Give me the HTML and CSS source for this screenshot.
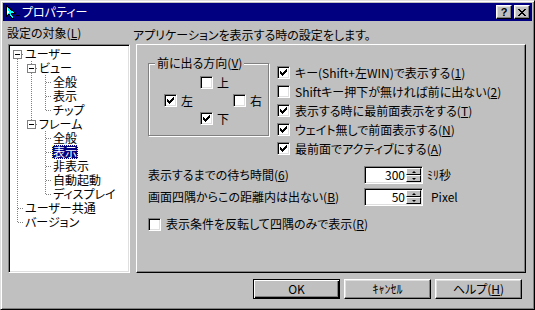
FILE: index.html
```html
<!DOCTYPE html>
<html lang="ja">
<head>
    <meta charset="UTF-8">
    <title>プロパティー</title>
    <link rel="stylesheet" href="styles.css">
</head>
<body>
    <svg class="defs" width="0" height="0">
        <symbol id="chk" viewBox="0 0 7 7">
            <path d="M6 0h1v1h-1zM5 1h2v1h-2zM0 2h1v1h-1zM4 2h3v1h-3zM0 3h2v1h-2zM3 3h3v1h-3zM0 4h5v1h-5zM1 5h3v1h-3zM2 6h1v1h-1z"/>
        </symbol>
    </svg>

    <div class="window">
        <div class="titlebar">
            <svg class="app-icon" width="16" height="16" viewBox="0 0 16 16" shape-rendering="crispEdges">
                <path d="M2 1v12l3-3 3 5 2-1-3-5h4z" fill="#00ffff" stroke="#000" stroke-width="1"/>
                <path d="M3 3v7l2-2z" fill="#fff"/>
                <rect x="12" y="11" width="4" height="1" fill="#000"/>
            </svg>
            <span class="title">プロパティー</span>
            <span class="tb-btn help">?</span>
            <span class="tb-btn close">
                <svg width="8" height="7" viewBox="0 0 8 7" shape-rendering="crispEdges">
                    <path d="M0 0h2v1h-2zM6 0h2v1h-2zM1 1h2v1h-2zM5 1h2v1h-2zM2 2h4v1h-4zM3 3h2v1h-2zM2 4h4v1h-4zM1 5h2v1h-2zM5 5h2v1h-2zM0 6h2v1h-2zM6 6h2v1h-2z"/>
                </svg>
            </span>
        </div>

        <div class="main">
            <div class="caption left">設定の対象(<u>L</u>)</div>
            <div class="caption right">アプリケーションを表示する時の設定をします。</div>

            <div class="tree">
                <div class="row"><span class="c f"><i class="box"></i></span><span class="lbl">ユーザー</span></div>
                <div class="row"><span class="c v"></span><span class="c t"><i class="box"></i></span><span class="lbl">ビュー</span></div>
                <div class="row"><span class="c v"></span><span class="c v"></span><span class="c t"></span><span class="lbl">全般</span></div>
                <div class="row"><span class="c v"></span><span class="c v"></span><span class="c t"></span><span class="lbl">表示</span></div>
                <div class="row"><span class="c v"></span><span class="c v"></span><span class="c l"></span><span class="lbl">チップ</span></div>
                <div class="row"><span class="c v"></span><span class="c l"><i class="box"></i></span><span class="lbl">フレーム</span></div>
                <div class="row"><span class="c v"></span><span class="c"></span><span class="c t"></span><span class="lbl">全般</span></div>
                <div class="row"><span class="c v"></span><span class="c"></span><span class="c t"></span><span class="lbl sel">表示</span></div>
                <div class="row"><span class="c v"></span><span class="c"></span><span class="c t"></span><span class="lbl">非表示</span></div>
                <div class="row"><span class="c v"></span><span class="c"></span><span class="c t"></span><span class="lbl">自動起動</span></div>
                <div class="row"><span class="c v"></span><span class="c"></span><span class="c l"></span><span class="lbl">ディスプレイ</span></div>
                <div class="row"><span class="c t"></span><span class="lbl">ユーザー共通</span></div>
                <div class="row"><span class="c l"></span><span class="lbl">バージョン</span></div>
            </div>

            <div class="page">
                <div class="top">
                    <fieldset class="group">
                        <legend>前に出る方向(<u>V</u>)</legend>
                        <label class="check dir-up"><span class="cb"></span><span>上</span></label>
                        <label class="check dir-left"><span class="cb"><svg><use href="#chk"/></svg></span><span>左</span></label>
                        <label class="check dir-right"><span class="cb"></span><span>右</span></label>
                        <label class="check dir-down"><span class="cb"><svg><use href="#chk"/></svg></span><span>下</span></label>
                    </fieldset>

                    <div class="opts">
                        <label class="check"><span class="cb"><svg><use href="#chk"/></svg></span><span>キー(Shift+左WIN)で表示する(<u>1</u>)</span></label>
                        <label class="check"><span class="cb"></span><span>Shiftキー押下が無ければ前に出ない(<u>2</u>)</span></label>
                        <label class="check"><span class="cb"><svg><use href="#chk"/></svg></span><span>表示する時に最前面表示をする(<u>T</u>)</span></label>
                        <label class="check"><span class="cb"><svg><use href="#chk"/></svg></span><span>ウェイト無しで前面表示する(<u>N</u>)</span></label>
                        <label class="check"><span class="cb"><svg><use href="#chk"/></svg></span><span>最前面でアクティブにする(<u>A</u>)</span></label>
                    </div>
                </div>

                <div class="fields">
                    <span>表示するまでの待ち時間(<u>6</u>)</span>
                    <div class="spin"><span class="val">300</span><span class="arrows"><i class="up"></i><i class="dn"></i></span></div>
                    <span class="unit">ﾐﾘ秒</span>

                    <span>画面四隅からこの距離内は出ない(<u>B</u>)</span>
                    <div class="spin"><span class="val">50</span><span class="arrows"><i class="up"></i><i class="dn"></i></span></div>
                    <span class="unit px">Pixel</span>
                </div>

                <label class="check invert"><span class="cb"></span><span>表示条件を反転して四隅のみで表示(<u>R</u>)</span></label>
            </div>
        </div>

        <div class="buttons">
            <button class="btn default">OK</button>
            <button class="btn">ｷｬﾝｾﾙ</button>
            <button class="btn"><span>ヘルプ(<u>H</u>)</span></button>
        </div>
    </div>
</body>
</html>
```

FILE: styles.css
```css
:root {
    --face: #c0c0c0;
    --light: #dfdfdf;
    --shadow: #808080;
    --vdot: repeating-linear-gradient(to bottom, #808080 0 1px, transparent 1px 2px);
    --hdot: repeating-linear-gradient(to right, #808080 0 1px, transparent 1px 2px);
}

* {
    box-sizing: border-box;
}

html, body {
    margin: 0;
    background: var(--face);
}

body {
    font-family: "Noto Sans CJK JP", "Noto Sans", sans-serif;
    font-size: 12px;
    line-height: 14px;
    color: #000;
    font-feature-settings: "palt";
}

u {
    text-decoration-thickness: 1px;
    text-underline-offset: 1px;
}

.defs {
    display: block;
}

/* window frame */

.window {
    width: 535px;
    height: 310px;
    border: 1px solid;
    border-color: var(--light) #000 #000 var(--light);
    box-shadow: inset 1px 1px #fff, inset -1px -1px var(--shadow);
    padding: 2px;
    display: flex;
    flex-direction: column;
    overflow: hidden;
}

.titlebar {
    height: 18px;
    flex: none;
    background: #000080;
    color: #fff;
    display: flex;
    align-items: center;
    padding: 0 2px 0 1px;
}

.app-icon {
    display: block;
    flex: none;
}

.title {
    margin-left: 2px;
}

.tb-btn {
    width: 16px;
    height: 14px;
    background: var(--face);
    border: 1px solid;
    border-color: #fff #000 #000 #fff;
    box-shadow: inset -1px -1px var(--shadow), inset 1px 1px var(--light);
    display: flex;
    align-items: center;
    justify-content: center;
    color: #000;
}

.tb-btn.help {
    margin-left: auto;
    font-family: "Liberation Sans", Arial, sans-serif;
    font-weight: bold;
    font-size: 11px;
    line-height: 12px;
}

.tb-btn.close {
    margin-left: 2px;
}

.tb-btn svg {
    display: block;
}

/* dialog body */

.main {
    display: grid;
    grid-template-columns: 122px 1fr;
    grid-template-rows: 23px 229px;
    column-gap: 6px;
    padding: 0 6px 0 5px;
}

.caption {
    white-space: nowrap;
}

.caption.left {
    padding-top: 5px;
    margin-left: -1px;
}

.caption.right {
    padding-top: 7px;
    margin-left: -3px;
}

/* tree view */

.tree {
    background: #fff;
    border: 1px solid;
    border-color: var(--shadow) #fff #fff var(--shadow);
    box-shadow: inset 1px 1px #000, inset -1px -1px var(--light);
    padding: 2px 0 0 1px;
}

.row {
    height: 14px;
    display: flex;
    align-items: center;
}

.c {
    width: 14px;
    height: 14px;
    flex: none;
    display: flex;
    align-items: flex-start;
}

.c.v {
    background: var(--vdot) 7px 0 / 1px 14px no-repeat;
}

.c.t {
    background: var(--hdot) 8px 7px / 6px 1px no-repeat, var(--vdot) 7px 0 / 1px 14px no-repeat;
}

.c.l {
    background: var(--hdot) 8px 7px / 6px 1px no-repeat, var(--vdot) 7px 0 / 1px 8px no-repeat;
}

.c.f {
    background: var(--hdot) 8px 7px / 6px 1px no-repeat, var(--vdot) 7px 8px / 1px 6px no-repeat;
}

.box {
    width: 9px;
    height: 9px;
    margin: 3px 0 0 3px;
    border: 1px solid var(--shadow);
    background: linear-gradient(#000, #000) center / 5px 1px no-repeat, #fff;
}

.lbl {
    height: 14px;
    line-height: 14px;
    padding: 0 1px;
    white-space: nowrap;
}

.lbl.sel {
    background: #000080;
    color: #fff;
    outline: 1px dotted #ffff80;
    outline-offset: -1px;
}

/* property page */

.page {
    border: 1px solid;
    border-color: #fff #000 #000 #fff;
    box-shadow: inset -1px -1px var(--shadow);
    padding: 12px 0 0 11px;
}

.top {
    display: flex;
    align-items: flex-start;
    gap: 8px;
}

.group {
    margin: 0;
    padding: 7px 0 5px 0;
    width: 121px;
    min-width: 0;
    border: 1px solid var(--shadow);
    box-shadow: inset 1px 1px #fff, 1px 1px #fff;
    display: grid;
    grid-template-columns: 15px 36px 33px auto;
    grid-template-rows: repeat(3, 18px);
}

.group legend {
    margin-left: 6px;
    padding: 0 2px;
    line-height: 12px;
    background: var(--face);
}

.check {
    display: flex;
    align-items: center;
    gap: 5px;
    white-space: nowrap;
}

.group .check {
    align-self: start;
    height: 13px;
    gap: 4px;
}

.dir-up { grid-area: 1 / 3; }
.dir-left { grid-area: 2 / 2; }
.dir-right { grid-area: 2 / 4; }
.dir-down { grid-area: 3 / 3; }

.cb {
    width: 13px;
    height: 13px;
    flex: none;
    background: #fff;
    border: 1px solid;
    border-color: var(--shadow) #fff #fff var(--shadow);
    box-shadow: inset 1px 1px #000, inset -1px -1px var(--light);
    display: flex;
    align-items: center;
    justify-content: center;
}

.cb svg {
    display: block;
    width: 7px;
    height: 7px;
    shape-rendering: crispEdges;
}

.opts {
    margin-top: 6px;
}

.opts .check {
    height: 19px;
}

.fields {
    display: grid;
    grid-template-columns: 216px 59px auto;
    grid-auto-rows: 22px;
    align-items: center;
    margin-top: 6px;
    white-space: nowrap;
}

.spin {
    height: 18px;
    display: flex;
    padding: 1px;
    background: #fff;
    border: 1px solid;
    border-color: var(--shadow) #fff #fff var(--shadow);
    box-shadow: inset 1px 1px #000, inset -1px -1px var(--light);
}

.val {
    flex: 1;
    text-align: right;
    padding-right: 1px;
    line-height: 14px;
}

.arrows {
    width: 15px;
    display: flex;
    flex-direction: column;
}

.arrows i {
    flex: 1;
    background: var(--face);
    border: 1px solid;
    border-color: #fff #000 #000 #fff;
    display: flex;
    align-items: center;
    justify-content: center;
}

.arrows i::after {
    content: "";
    width: 0;
    height: 0;
    border-left: 2px solid transparent;
    border-right: 2px solid transparent;
}

.arrows .up::after {
    border-bottom: 2px solid #000;
}

.arrows .dn::after {
    border-top: 2px solid #000;
}

.unit {
    margin-left: 4px;
}

.unit.px {
    margin-left: 8px;
}

.invert {
    height: 22px;
    margin-top: 5px;
}

/* buttons */

.buttons {
    display: flex;
    justify-content: flex-end;
    gap: 4px;
    padding: 6px 10px 0 0;
}

.btn {
    width: 87px;
    height: 20px;
    padding: 0;
    font: inherit;
    color: #000;
    background: var(--face);
    border: 1px solid;
    border-color: #fff #000 #000 #fff;
    box-shadow: inset -1px -1px var(--shadow), inset 1px 1px var(--light);
    display: flex;
    align-items: center;
    justify-content: center;
}

.btn.default {
    border-color: #000;
    box-shadow: inset 1px 1px #fff, inset -1px -1px #000, inset -2px -2px var(--shadow);
}
```
